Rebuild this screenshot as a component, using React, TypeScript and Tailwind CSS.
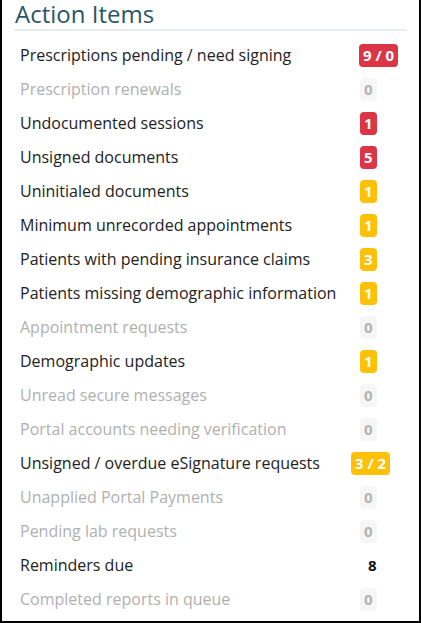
import React from 'react'

type Tone = 'red' | 'yellow' | 'gray' | 'plain'

type Item = {
  label: string
  value: string
  tone: Tone
  muted?: boolean
  offset: string
}

const items: Item[] = [
  { label: 'Prescriptions pending / need signing', value: '9 / 0', tone: 'red', offset: 'ml-[9px]' },
  { label: 'Prescription renewals', value: '0', tone: 'gray', muted: true, offset: 'ml-[10px]' },
  { label: 'Undocumented sessions', value: '1', tone: 'red', offset: 'ml-[10px]' },
  { label: 'Unsigned documents', value: '5', tone: 'red', offset: 'ml-[10px]' },
  { label: 'Uninitialed documents', value: '1', tone: 'yellow', offset: 'ml-[10px]' },
  { label: 'Minimum unrecorded appointments', value: '1', tone: 'yellow', offset: 'ml-[10px]' },
  { label: 'Patients with pending insurance claims', value: '3', tone: 'yellow', offset: 'ml-[10px]' },
  { label: 'Patients missing demographic information', value: '1', tone: 'yellow', offset: 'ml-[10px]' },
  { label: 'Appointment requests', value: '0', tone: 'gray', muted: true, offset: 'ml-[10px]' },
  { label: 'Demographic updates', value: '1', tone: 'yellow', offset: 'ml-[10px]' },
  { label: 'Unread secure messages', value: '0', tone: 'gray', muted: true, offset: 'ml-[10px]' },
  { label: 'Portal accounts needing verification', value: '0', tone: 'gray', muted: true, offset: 'ml-[10px]' },
  { label: 'Unsigned / overdue eSignature requests', value: '3 / 2', tone: 'yellow', offset: 'ml-[1px]' },
  { label: 'Unapplied Portal Payments', value: '0', tone: 'gray', muted: true, offset: 'ml-[10px]' },
  { label: 'Pending lab requests', value: '0', tone: 'gray', muted: true, offset: 'ml-[10px]' },
  { label: 'Reminders due', value: '8', tone: 'plain', offset: 'ml-[14px]' },
  { label: 'Completed reports in queue', value: '0', tone: 'gray', muted: true, offset: 'ml-[10px]' }
]

const toneClass: Record<Tone, string> = {
  red: 'bg-[#dc3545] text-white',
  yellow: 'bg-[#ffc107] text-white',
  gray: 'bg-[#f6f6f6] text-[#b3b3b3]',
  plain: 'text-[#111]'
}

const Badge: React.FC<{ item: Item }> = ({ item }) => (
  <span
    className={`${item.offset} ${toneClass[item.tone]} inline-flex h-[23px] items-center rounded-[4px] px-[4px] text-[15px] font-bold leading-none`}
  >
    {item.value}
  </span>
)

export default function App() {
  return (
    <div
      className="h-[623px] w-[421px] border-2 border-t-0 border-black bg-white"
      style={{ fontFamily: '"Open Sans", "Noto Sans", sans-serif' }}
    >
      {/* Titulo */}
      <div className="mx-[12px] border-b-2 border-[#e9ecee] pb-[1px] pl-[1px]">
        <h2 className="text-[24px] leading-[28px] text-[#2a5567]">Action Items</h2>
      </div>

      {/* Lista */}
      <ul className="pt-[7px]">
        {items.map(item => (
          <li key={item.label} className="flex h-[34px] items-center pl-[18px]">
            <span
              className={`w-[330px] text-[16px] ${item.muted ? 'text-[#b0b0b0]' : 'text-[#222]'}`}
            >
              {item.label}
            </span>
            <div className="flex w-[60px] items-center">
              <Badge item={item} />
            </div>
          </li>
        ))}
      </ul>
    </div>
  )
}
